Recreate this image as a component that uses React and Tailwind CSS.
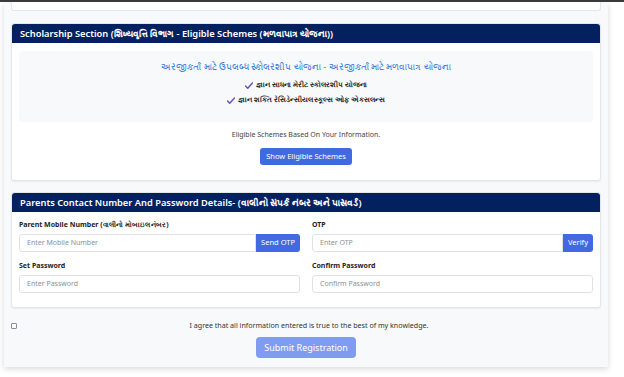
import React from "react";

const font = { fontFamily: '"Noto Sans", "Open Sans", sans-serif' };

function Check() {
  return (
    <svg width="8" height="7" viewBox="0 0 16 14" className="inline-block mr-[3px]">
      <path d="M1 8 L5.5 12.5 L15 2" fill="none" stroke="#6b4fbb" strokeWidth="3" strokeLinecap="round" strokeLinejoin="round" />
    </svg>
  );
}

function SectionHeader({ children }) {
  return (
    <div className="h-[19px] bg-[#03215f] rounded-t-[3px] px-[8px] flex items-center text-white text-[9.3px] font-semibold leading-none whitespace-nowrap">
      {children}
    </div>
  );
}

function Field({ label, placeholder, button }) {
  return (
    <div className="flex flex-col">
      <div className="h-[12px] flex items-center text-[7px] font-bold text-[#222] leading-none">{label}</div>
      <div className="mt-[4px] flex h-[18px]">
        <div
          className={`flex-1 flex items-center px-[7px] border border-[#dee2e6] bg-white text-[7px] text-[#8a8f96] ${
            button ? "rounded-l-[3px]" : "rounded-[3px]"
          }`}
        >
          {placeholder}
        </div>
        {button && (
          <div className="px-[5px] flex items-center bg-[#4169e1] text-white text-[7.5px] rounded-r-[3px]">{button}</div>
        )}
      </div>
    </div>
  );
}

export default function App() {
  return (
    <div className="w-[624px] h-[377px] bg-white border-t-2 border-[#3a3a3a] overflow-hidden" style={font}>
      <div className="ml-[4px] w-[604px] h-[365px] bg-[#f8f9fa] shadow-[0_2px_6px_rgba(0,0,0,0.15)] px-[7px]">
        {/* bottom of previous card */}
        <div className="h-[9px] bg-white border-x border-b border-[#e3e6ea] rounded-b-[3px]" />

        {/* scholarship section */}
        <div className="mt-[12px] bg-white border border-[#e3e6ea] rounded-[3px] shadow-[0_1px_2px_rgba(0,0,0,0.06)]">
          <SectionHeader>Scholarship Section (શિષ્યવૃત્તિ વિભાગ - Eligible Schemes (મળવાપાત્ર યોજના))</SectionHeader>
          <div className="px-[7px] pt-[8px] pb-[15px]">
            <div className="h-[71px] bg-[#f8f9fa] rounded-[4px] flex flex-col items-center pt-[9px]">
              <div className="text-[9.2px] text-[#3d7fd9] leading-none h-[14px] flex items-center">
                અરજીકર્તા માટે ઉપલબ્ધ સ્કોલરશીપ યોજના - અરજીકર્તા માટે મળવાપાત્ર યોજના
              </div>
              <div className="mt-[4px] text-[7.2px] font-bold text-[#222] leading-none h-[14px] flex items-center">
                <Check />
                જ્ઞાન સાધના મેરીટ સ્કોલરશીપ યોજના
              </div>
              <div className="mt-[1px] text-[7.2px] font-bold text-[#222] leading-none h-[14px] flex items-center">
                <Check />
                જ્ઞાન શક્તિ રેસિડેન્સીયલ સ્કૂલ્સ ઓફ એક્સલન્સ
              </div>
            </div>
            <div className="mt-[7px] text-center text-[7px] text-[#444] leading-none h-[10px] flex items-center justify-center">
              Eligible Schemes Based On Your Information.
            </div>
            <div className="mt-[9px] flex justify-center">
              <div className="h-[17px] px-[6px] flex items-center bg-[#4169e1] text-white text-[7.5px] rounded-[3px]">
                Show Eligible Schemes
              </div>
            </div>
          </div>
        </div>

        {/* parents contact section */}
        <div className="mt-[11px] bg-white border border-[#e3e6ea] rounded-[3px] shadow-[0_1px_2px_rgba(0,0,0,0.06)]">
          <SectionHeader>Parents Contact Number And Password Details- (વાલીનો સંપર્ક નંબર અને પાસવર્ડ)</SectionHeader>
          <div className="px-[7px] pt-[6px] pb-[14px] grid grid-cols-2 gap-x-[12px] gap-y-[7px]">
            <Field label="Parent Mobile Number (વાલીનો મોબાઇલ નંબર)" placeholder="Enter Mobile Number" button="Send OTP" />
            <Field label="OTP" placeholder="Enter OTP" button="Verify" />
            <Field label="Set Password" placeholder="Enter Password" />
            <Field label="Confirm Password" placeholder="Confirm Password" />
          </div>
        </div>

        {/* agreement */}
        <div className="mt-[12px] h-[12px] flex items-center">
          <div className="w-[6px] h-[6px] border border-[#8a8f96] rounded-[1px] bg-white" />
          <div className="flex-1 text-center text-[7.1px] text-[#333] leading-none">
            I agree that all information entered is true to the best of my knowledge.
          </div>
        </div>
        <div className="mt-[5px] flex justify-center">
          <div className="h-[21px] px-[8px] flex items-center bg-[#7f9cf0] text-white text-[9px] rounded-[4px]">
            Submit Registration
          </div>
        </div>
      </div>
    </div>
  );
}
